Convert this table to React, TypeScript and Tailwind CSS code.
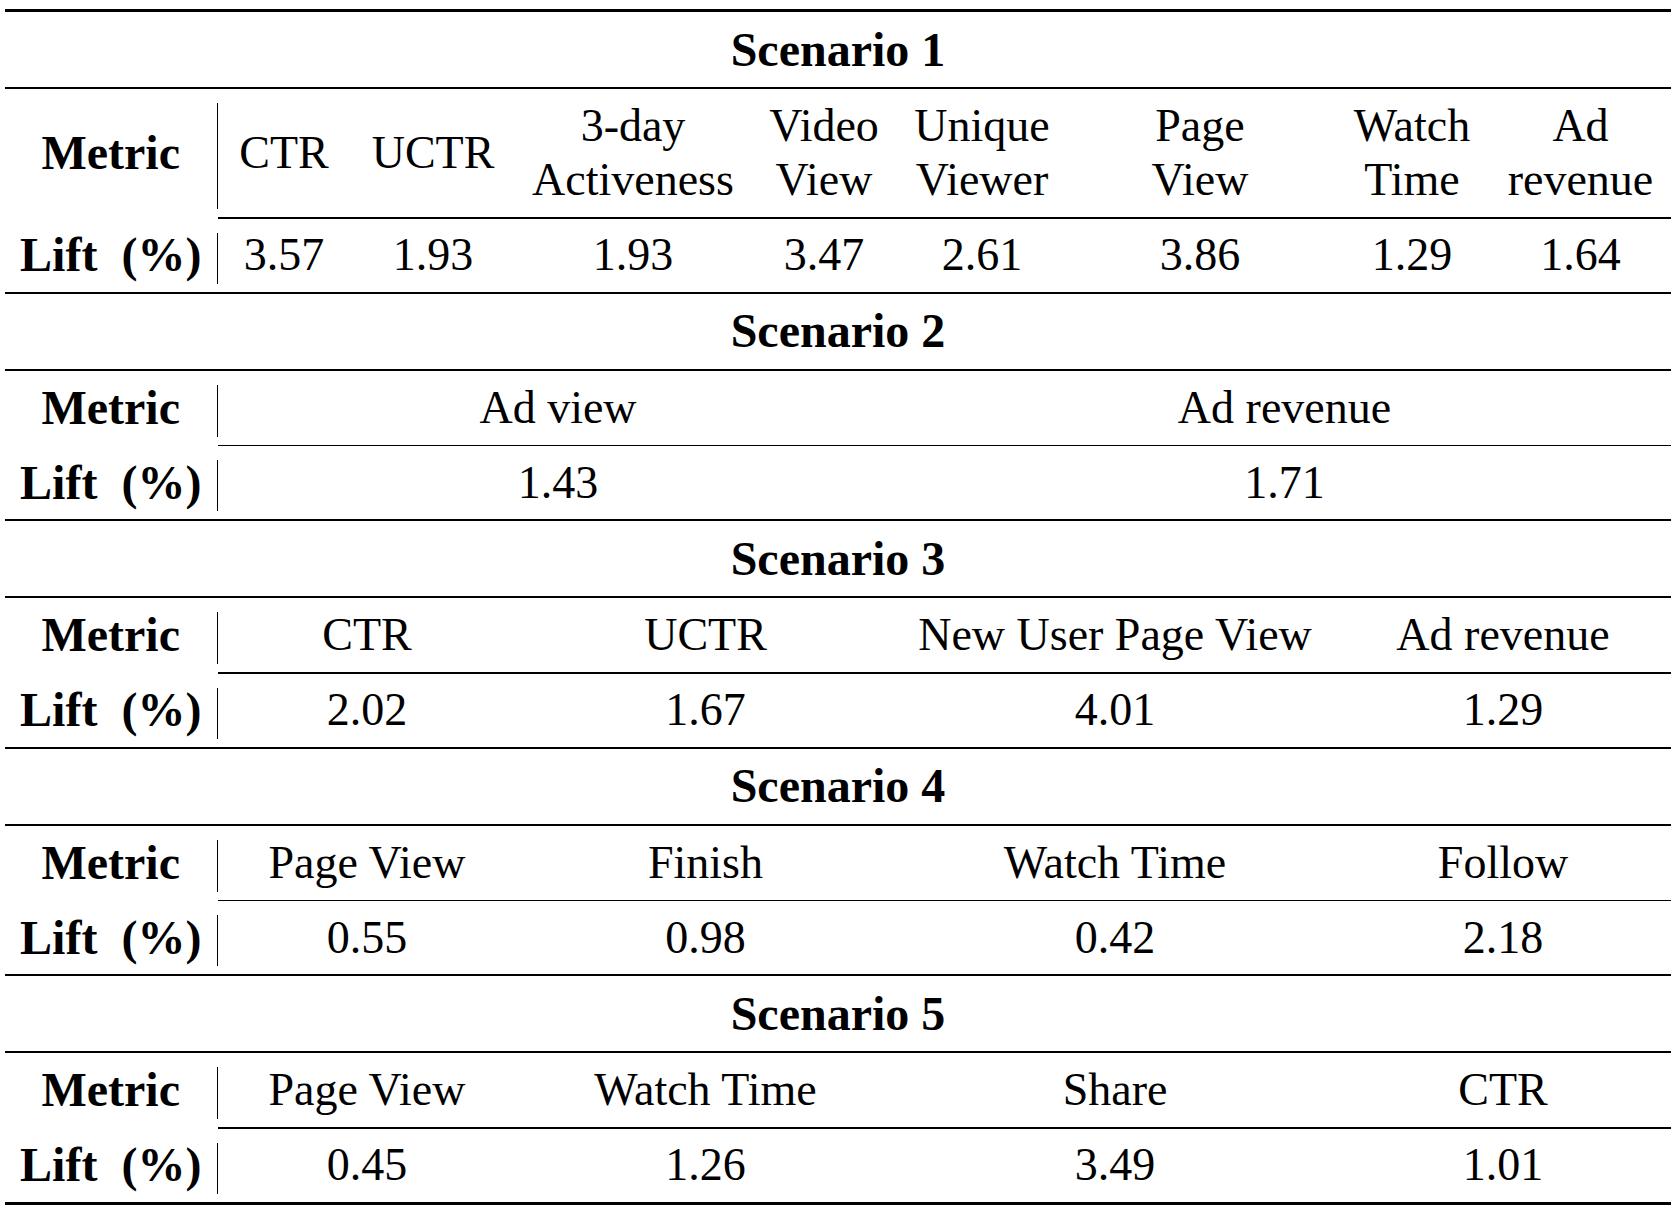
import React from 'react'

type Block = {
  title: string
  widths: string[]
  metrics: string[][]
  lifts: string[]
  tall?: boolean
}

const blocks: Block[] = [
  {
    title: 'Scenario 1',
    tall: true,
    widths: ['w-[132px]', 'w-[166px]', 'w-[234px]', 'w-[148px]', 'w-[168px]', 'w-[268px]', 'w-[156px]', 'w-[181px]'],
    metrics: [['CTR'], ['UCTR'], ['3-day', 'Activeness'], ['Video', 'View'], ['Unique', 'Viewer'], ['Page', 'View'], ['Watch', 'Time'], ['Ad', 'revenue']],
    lifts: ['3.57', '1.93', '1.93', '3.47', '2.61', '3.86', '1.29', '1.64'],
  },
  {
    title: 'Scenario 2',
    widths: ['w-[680px]', 'w-[773px]'],
    metrics: [['Ad view'], ['Ad revenue']],
    lifts: ['1.43', '1.71'],
  },
  {
    title: 'Scenario 3',
    widths: ['w-[298px]', 'w-[379px]', 'w-[440px]', 'w-[336px]'],
    metrics: [['CTR'], ['UCTR'], ['New User Page View'], ['Ad revenue']],
    lifts: ['2.02', '1.67', '4.01', '1.29'],
  },
  {
    title: 'Scenario 4',
    widths: ['w-[298px]', 'w-[379px]', 'w-[440px]', 'w-[336px]'],
    metrics: [['Page View'], ['Finish'], ['Watch Time'], ['Follow']],
    lifts: ['0.55', '0.98', '0.42', '2.18'],
  },
  {
    title: 'Scenario 5',
    widths: ['w-[298px]', 'w-[379px]', 'w-[440px]', 'w-[336px]'],
    metrics: [['Page View'], ['Watch Time'], ['Share'], ['CTR']],
    lifts: ['0.45', '1.26', '3.49', '1.01'],
  },
]

const Label = ({ text }: { text: string }) => (
  <div className="flex w-[213px] shrink-0">
    <div className="flex flex-1 items-center justify-center text-[48px] font-bold whitespace-pre">{text}</div>
    <div className="mt-[14px] mb-[8px] w-[1.5px] bg-black" />
  </div>
)

const Cell = ({ w, lines }: { w: string; lines: string[] }) => (
  <div className={`${w} flex flex-col items-center justify-center leading-[54px]`}>
    {lines.map((l) => (
      <span key={l} className="whitespace-nowrap">{l}</span>
    ))}
  </div>
)

const Section = ({ b, last }: { b: Block; last: boolean }) => (
  <>
    <div className="flex h-[75px] items-center justify-center text-[48px] font-bold">{b.title}</div>
    <div className="h-[2px] bg-black" />
    <div className={b.tall ? 'flex h-[128px]' : 'flex h-[74px]'}>
      <Label text="Metric" />
      {b.metrics.map((m, i) => (
        <Cell key={i} w={b.widths[i]} lines={m} />
      ))}
    </div>
    <div className="flex">
      <div className="w-[213px] shrink-0" />
      <div className="h-[1.5px] flex-1 bg-black" />
    </div>
    <div className="flex h-[73px]">
      <Label text="Lift  (%)" />
      {b.lifts.map((v, i) => (
        <Cell key={i} w={b.widths[i]} lines={[v]} />
      ))}
    </div>
    <div className={last ? 'h-[3px] bg-black' : 'h-[2px] bg-black'} />
  </>
)

export default function App() {
  return (
    <div className="min-h-[1216px] w-[1676px] bg-white pt-[9px] pl-[5px] font-['Liberation_Serif',serif] text-[46px] text-black">
      <div className="flex w-[1666px] flex-col">
        <div className="h-[3px] bg-black" />
        {blocks.map((b, i) => (
          <Section key={b.title} b={b} last={i === blocks.length - 1} />
        ))}
      </div>
    </div>
  )
}
